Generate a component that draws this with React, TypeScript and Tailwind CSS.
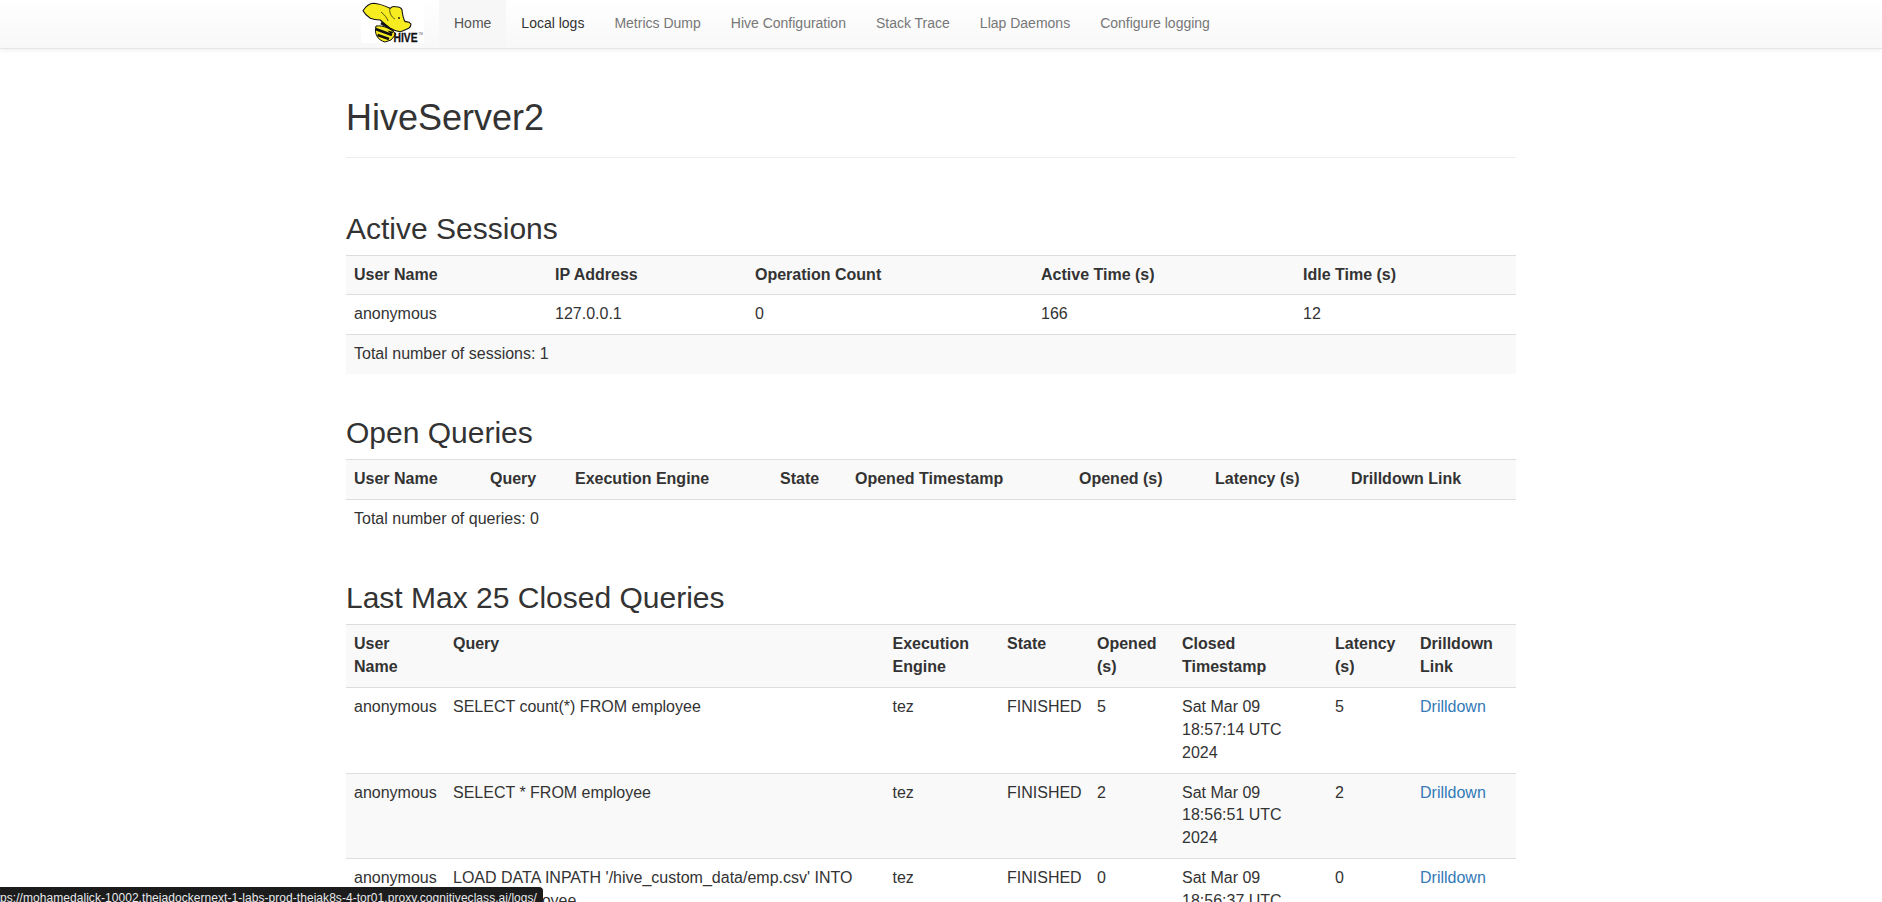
import React from "react";

const Th = ({ children, className = "" }: { children: React.ReactNode; className?: string }) => (
  <th className={`px-2 pt-2 text-left align-top font-bold border-b border-[#ddd] ${className}`}>{children}</th>
);

function Logo() {
  return (
    <svg width="63" height="41" viewBox="0 0 63 41" className="block">
      <rect width="63" height="41" fill="#fff" />
      <path d="M15 24 C22 23 31 27 35 32 L30 38 L24 40 C16 38 13 31 15 24 Z" fill="#f7ec1f" stroke="#111" strokeWidth="1" />
      <path d="M14.5 27 L31 33 M16.5 33 L28 37 M20 21 L33 28" stroke="#111" strokeWidth="2.6" fill="none" />
      <path d="M2 8.7 C5 4 9 1.5 12.7 1.3 C18 1.5 24 4 29 6.3 C31 4.5 33 4.3 34 4.7 C38 4.5 40.5 6 41 8 C41.5 11 41.5 14 42.7 16.3 C43 18 43.5 19 44.3 19.7 C47 19.5 49 20.5 50 22 C50 24 49 25.5 47.7 26.3 C45 27.5 42 29 39.3 29.7 C35 29.5 32 28 29.3 26.3 C26 24 22 20.5 19.3 18 C15 18 12 17.5 9.3 16.3 C6 14 3.5 11.5 2 8.7 Z" fill="#f7ec1f" stroke="#111" strokeWidth="1.1" />
      <path d="M29 6.3 C28 10 30 15 34 17 M20 10 C24 13 26 16 27 19" stroke="#111" strokeWidth="0.7" fill="none" />
      <circle cx="38" cy="16" r="0.9" fill="#111" />
      <path d="M30 32 L26.5 28.5 L33 30 Z" fill="#111" />
      <text x="32.5" y="39.7" fontFamily="Liberation Sans, sans-serif" fontWeight="900" fontSize="12.5" fill="#111" stroke="#111" strokeWidth="0.3" textLength="24" lengthAdjust="spacingAndGlyphs">HIVE</text>
      <text x="57.5" y="33" fontFamily="Liberation Sans, sans-serif" fontSize="3" fill="#555">TM</text>
    </svg>
  );
}

const links = ["Home", "Local logs", "Metrics Dump", "Hive Configuration", "Stack Trace", "Llap Daemons", "Configure logging"];
const td = "p-2 align-top border-t border-[#ddd]";

function ClosedRow({ q, opened, ts, lat }: { q: string; opened: string; ts: string; lat: string }) {
  return (
    <tr>
      <td className={td}>anonymous</td>
      <td className={td}>{q}</td>
      <td className={td}>tez</td>
      <td className={td}>FINISHED</td>
      <td className={td}>{opened}</td>
      <td className={td}>{ts}</td>
      <td className={td}>{lat}</td>
      <td className={`${td} text-[#337ab7]`}>Drilldown</td>
    </tr>
  );
}

export default function App() {
  return (
    <div className="relative h-[902px] overflow-hidden bg-white font-['Liberation_Sans',Arial,sans-serif] text-base leading-[22.857px] text-[#333]">
      <nav className="h-[49px] border-b border-[#e7e7e7] bg-gradient-to-b from-white to-[#f8f8f8] pr-5 text-sm leading-5 shadow-[0_1px_5px_rgba(0,0,0,0.075)]">
        <div className="mx-auto flex w-[1170px] pl-[15px]">
          <div className="h-[48px] pt-[2px] pr-[15px]"><Logo /></div>
          {links.map((l, i) => (
            <a key={l} className={`block h-[48px] px-[15px] pt-[13px] ${i === 0 ? "bg-[#f7f7f7] text-[#555]" : i === 1 ? "text-[#333]" : "text-[#777]"}`}>{l}</a>
          ))}
        </div>
      </nav>
      <div className="pr-5">
        <main className="mx-auto w-[1170px]">
          <div className="mt-[29px] border-b border-[#eee] pb-[9px] pt-[10px]">
            <h1 className="text-[36px] leading-[40px] my-[10px] font-medium">HiveServer2</h1>
          </div>
          <section className="mt-[54px]">
            <h2 className="text-[30px] leading-[33px] mb-[10px]">Active Sessions</h2>
            <table className="w-full table-fixed border-collapse">
              <thead className="bg-[#f9f9f9]"><tr className="border-t border-[#ddd]">
                <Th className="w-[201px] pb-[7px]">User Name</Th><Th className="w-[200px] pb-[7px]">IP Address</Th><Th className="w-[286px] pb-[7px]">Operation Count</Th><Th className="w-[262px] pb-[7px]">Active Time (s)</Th><Th className="pb-[7px]">Idle Time (s)</Th>
              </tr></thead>
              <tbody>
                <tr><td className="p-2">anonymous</td><td className="p-2">127.0.0.1</td><td className="p-2">0</td><td className="p-2">166</td><td className="p-2">12</td></tr>
                <tr className="bg-[#f9f9f9]"><td colSpan={5} className="p-2 border-t border-[#ddd]">Total number of sessions: 1</td></tr>
              </tbody>
            </table>
          </section>
          <section className="mt-[42px]">
            <h2 className="text-[30px] leading-[33px] mb-[10px]">Open Queries</h2>
            <table className="w-full table-fixed border-collapse">
              <thead className="bg-[#f9f9f9]"><tr className="border-t border-[#ddd]">
                <Th className="w-[136px] pb-[9px]">User Name</Th><Th className="w-[85px] pb-[9px]">Query</Th><Th className="w-[205px] pb-[9px]">Execution Engine</Th><Th className="w-[75px] pb-[9px]">State</Th><Th className="w-[224px] pb-[9px]">Opened Timestamp</Th><Th className="w-[136px] pb-[9px]">Opened (s)</Th><Th className="w-[136px] pb-[9px]">Latency (s)</Th><Th className="pb-[9px]">Drilldown Link</Th>
              </tr></thead>
              <tbody>
                <tr><td colSpan={8} className="p-2">Total number of queries: 0</td></tr>
              </tbody>
            </table>
          </section>
          <section className="mt-[42px]">
            <h2 className="text-[30px] leading-[33px] mb-[10px]">Last Max 25 Closed Queries</h2>
            <table className="w-full table-fixed border-collapse">
              <thead className="bg-[#f9f9f9]"><tr className="border-t border-[#ddd]">
                <Th className="w-[99px] pb-2">User Name</Th><Th className="w-[439.5px] pb-2">Query</Th><Th className="w-[114.5px] pb-2">Execution Engine</Th><Th className="w-[90px] pb-2">State</Th><Th className="w-[85px] pb-2">Opened (s)</Th><Th className="w-[153px] pb-2">Closed Timestamp</Th><Th className="w-[85px] pb-2">Latency (s)</Th><Th className="pb-2">Drilldown Link</Th>
              </tr></thead>
              <tbody className="[&>tr:nth-child(even)]:bg-[#f9f9f9]">
                <ClosedRow q="SELECT count(*) FROM employee" opened="5" ts="Sat Mar 09 18:57:14 UTC 2024" lat="5" />
                <ClosedRow q="SELECT * FROM employee" opened="2" ts="Sat Mar 09 18:56:51 UTC 2024" lat="2" />
                <ClosedRow q="LOAD DATA INPATH '/hive_custom_data/emp.csv' INTO TABLE employee" opened="0" ts="Sat Mar 09 18:56:37 UTC 2024" lat="0" />
              </tbody>
            </table>
          </section>
        </main>
      </div>
      <div className="absolute bottom-0 left-0 flex h-[15px] w-[543px] justify-end overflow-hidden whitespace-nowrap rounded-tr bg-[#1c1c1c] pr-[6px] pt-[3px] text-xs leading-4 tracking-[0.05px] text-[#e8eaed]">
        <span className="shrink-0">https://mohamedalick-10002.theiadockernext-1-labs-prod-theiak8s-4-tor01.proxy.cognitiveclass.ai/logs/</span>
      </div>
    </div>
  );
}
